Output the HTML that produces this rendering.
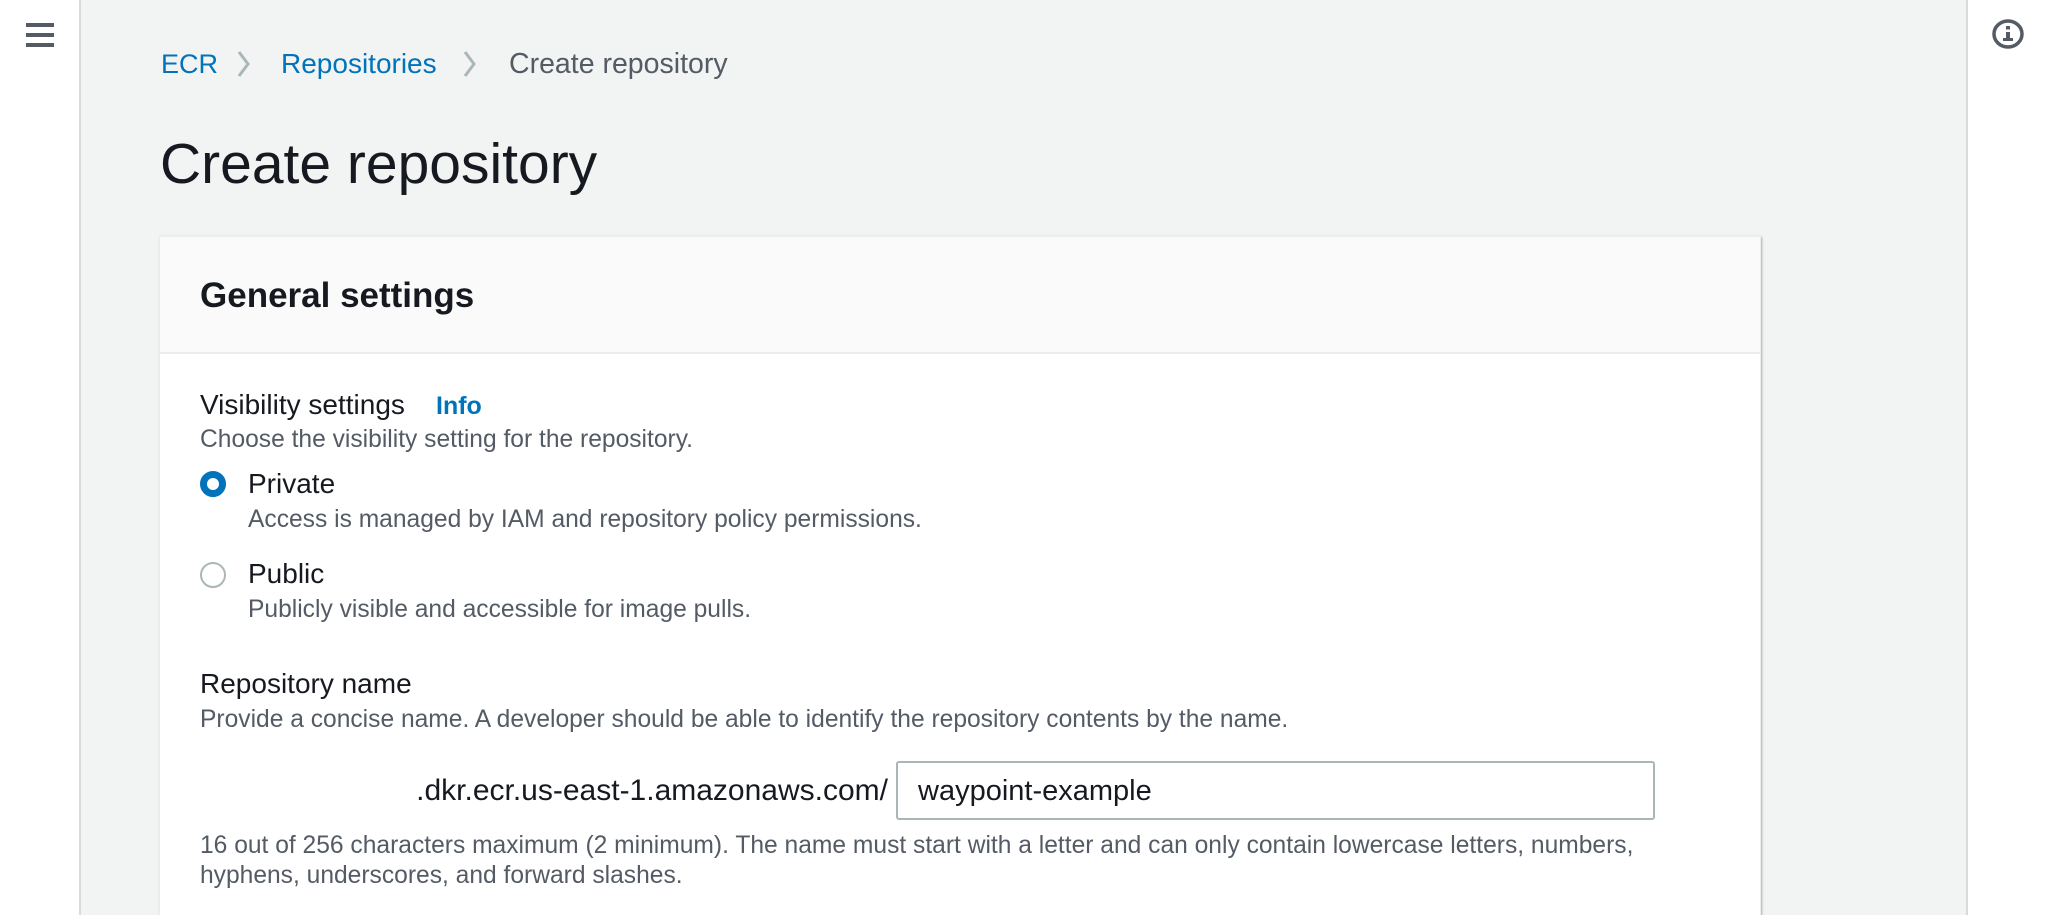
<!DOCTYPE html>
<html><head><meta charset="utf-8"><style>
*{margin:0;padding:0;box-sizing:border-box}
html,body{width:2048px;height:915px;overflow:hidden}
body{background:#f2f3f3;font-family:"Liberation Sans",sans-serif;color:#16191f;position:relative}
.abs{position:absolute;white-space:nowrap;line-height:1}
.side{position:absolute;left:0;top:0;width:81px;height:915px;background:#fff;border-right:2px solid #d5dbdb}
.rside{position:absolute;left:1966px;top:0;width:82px;height:915px;background:#fff;border-left:2px solid #d5dbdb}
.ham{position:absolute;left:26px;width:28px;height:4px;background:#545b64}
.card{position:absolute;left:159px;top:236px;width:1602px;height:679px;background:#fff;border:1px solid #eaeded;border-bottom:none;box-shadow:1px 1px 2px rgba(0,28,36,.3)}
.hdr{height:117px;background:#fafafa;border-bottom:2px solid #eaeded}
.sec{color:#545b64;font-size:24.6px}
.lbl{font-size:28px}
.blue{color:#0073bb}
</style></head><body>
<div class="side">
<div class="ham" style="top:23px"></div><div class="ham" style="top:33px"></div><div class="ham" style="top:43px"></div>
</div>
<div class="rside">
<svg style="position:absolute;left:23px;top:18px" width="34" height="32" viewBox="0 0 34 32"><ellipse cx="17" cy="16" rx="14" ry="13" fill="none" stroke="#545b64" stroke-width="3.5"/><rect x="15" y="14" width="4" height="8" fill="#545b64"/><rect x="15" y="8" width="4" height="3.5" fill="#545b64"/><rect x="12" y="20" width="10" height="3" fill="#545b64"/></svg>
</div>

<div class="abs blue" style="left:161px;top:51px;font-size:27px">ECR</div>
<svg class="abs" style="left:236px;top:50px" width="16" height="28"><path d="M3 2 L12 14 L3 26" fill="none" stroke="#aab7b8" stroke-width="3"/></svg>
<div class="abs blue" style="left:281px;top:50px;font-size:28px">Repositories</div>
<svg class="abs" style="left:462px;top:50px" width="16" height="28"><path d="M3 2 L12 14 L3 26" fill="none" stroke="#aab7b8" stroke-width="3"/></svg>
<div class="abs" style="left:509px;top:50px;font-size:28.5px;color:#545b64">Create repository</div>

<div class="abs" style="left:160px;top:136px;font-size:57px">Create repository</div>

<div class="card"><div class="hdr"></div></div>
<div class="abs" style="left:200px;top:278px;font-size:35px;font-weight:bold">General settings</div>

<div class="abs lbl" style="left:200px;top:391px">Visibility settings</div>
<div class="abs blue" style="left:436px;top:394px;font-size:25px;font-weight:bold">Info</div>
<div class="abs sec" style="left:200px;top:428px">Choose the visibility setting for the repository.</div>

<div class="abs" style="left:200px;top:471px;width:26px;height:26px;border-radius:50%;border:7px solid #0073bb;background:#fff"></div>
<div class="abs lbl" style="left:248px;top:470px">Private</div>
<div class="abs sec" style="left:248px;top:508px">Access is managed by IAM and repository policy permissions.</div>

<div class="abs" style="left:200px;top:562px;width:26px;height:26px;border-radius:50%;border:2px solid #aab7b8;background:#fff"></div>
<div class="abs lbl" style="left:248px;top:560px">Public</div>
<div class="abs sec" style="left:248px;top:598px">Publicly visible and accessible for image pulls.</div>

<div class="abs lbl" style="left:200px;top:670px">Repository name</div>
<div class="abs sec" style="left:200px;top:708px">Provide a concise name. A developer should be able to identify the repository contents by the name.</div>

<div class="abs" style="right:1160px;top:776px;font-size:30px">.dkr.ecr.us-east-1.amazonaws.com/</div>
<div class="abs" style="left:896px;top:761px;width:759px;height:59px;border:2px solid #aab7b8;border-radius:3px;background:#fff"></div>
<div class="abs" style="left:918px;top:777px;font-size:29px">waypoint-example</div>

<div class="abs sec" style="left:200px;top:834px">16 out of 256 characters maximum (2 minimum). The name must start with a letter and can only contain lowercase letters, numbers,</div>
<div class="abs sec" style="left:200px;top:864px">hyphens, underscores, and forward slashes.</div>
</body></html>
